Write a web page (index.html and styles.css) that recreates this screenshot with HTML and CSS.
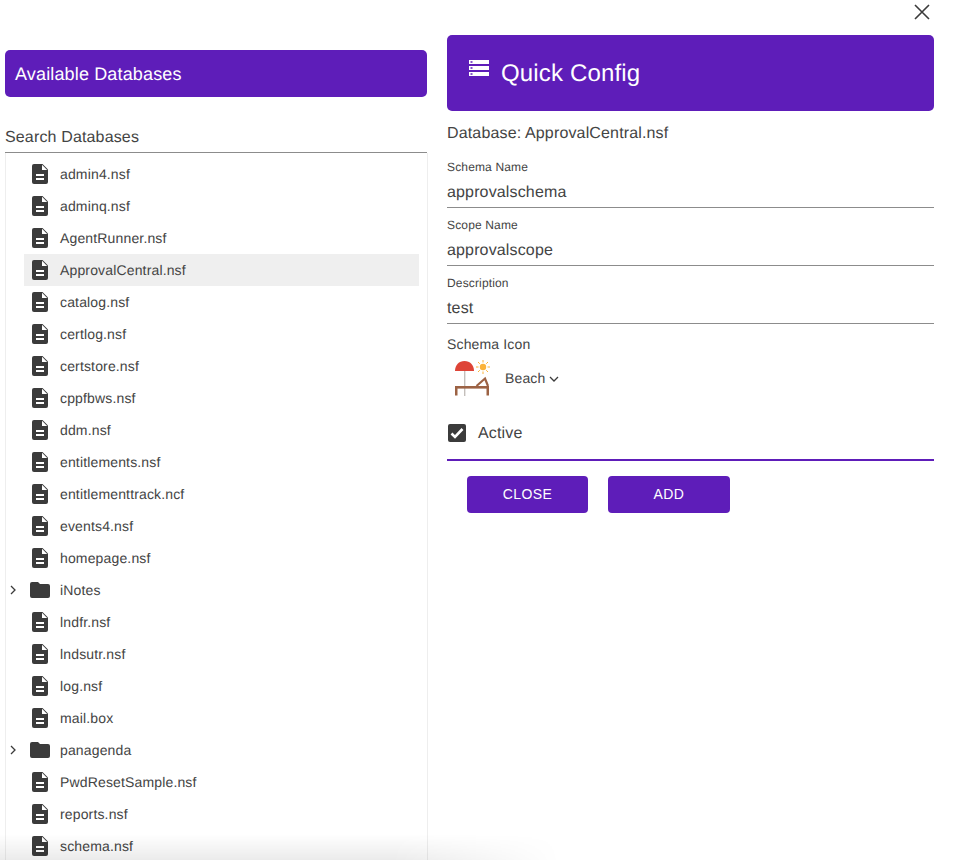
FILE: index.html
```html
<!DOCTYPE html>
<html lang="en">
  <head>
    <meta charset="UTF-8" />
    <meta name="viewport" content="width=device-width, initial-scale=1.0" />
    <title>Quick Config</title>
    <link rel="stylesheet" href="styles.css">
  </head>
  <body>
    <svg width="0" height="0" class="sprites">
      <symbol id="file" viewBox="0 0 16 20">
        <path d="M2 0h8.500L16 5.500V18a2 2 0 0 1-2 2H2a2 2 0 0 1-2-2V2a2 2 0 0 1 2-2z" fill="#3b3b3b"/>
        <path d="M10 .8V6h5.200z" fill="#fff"/>
        <rect x="4" y="10" width="8" height="2" fill="#fff"/>
        <rect x="4" y="14" width="8" height="2" fill="#fff"/>
      </symbol>
      <symbol id="folder" viewBox="0 0 20 16">
        <path d="M2 0h6l2 2h8a2 2 0 0 1 2 2v10a2 2 0 0 1-2 2H2a2 2 0 0 1-2-2V2a2 2 0 0 1 2-2z" fill="#3b3b3b"/>
      </symbol>
    </svg>

    <button class="dialog-close" aria-label="Close">
      <svg width="16" height="16" viewBox="0 0 16 16"><path d="M1 1l14 14M15 1L1 15" stroke="#3b3b3b" stroke-width="1.6" fill="none"/></svg>
    </button>

    <div class="dialog">
      <section class="left-col">
        <div class="banner-small">Available Databases</div>
        <div class="search-label">Search Databases</div>
        <ul class="tree">
          <li class="tree-row"><svg class="ico-file"><use href="#file"/></svg>admin4.nsf</li>
          <li class="tree-row"><svg class="ico-file"><use href="#file"/></svg>adminq.nsf</li>
          <li class="tree-row"><svg class="ico-file"><use href="#file"/></svg>AgentRunner.nsf</li>
          <li class="tree-row selected"><svg class="ico-file"><use href="#file"/></svg>ApprovalCentral.nsf</li>
          <li class="tree-row"><svg class="ico-file"><use href="#file"/></svg>catalog.nsf</li>
          <li class="tree-row"><svg class="ico-file"><use href="#file"/></svg>certlog.nsf</li>
          <li class="tree-row"><svg class="ico-file"><use href="#file"/></svg>certstore.nsf</li>
          <li class="tree-row"><svg class="ico-file"><use href="#file"/></svg>cppfbws.nsf</li>
          <li class="tree-row"><svg class="ico-file"><use href="#file"/></svg>ddm.nsf</li>
          <li class="tree-row"><svg class="ico-file"><use href="#file"/></svg>entitlements.nsf</li>
          <li class="tree-row"><svg class="ico-file"><use href="#file"/></svg>entitlementtrack.ncf</li>
          <li class="tree-row"><svg class="ico-file"><use href="#file"/></svg>events4.nsf</li>
          <li class="tree-row"><svg class="ico-file"><use href="#file"/></svg>homepage.nsf</li>
          <li class="tree-row folder">
            <svg class="ico-caret" viewBox="0 0 6 10"><path d="M1 1l4 4-4 4" stroke="#3b3b3b" stroke-width="1.3" fill="none"/></svg>
            <svg class="ico-folder"><use href="#folder"/></svg>iNotes
          </li>
          <li class="tree-row"><svg class="ico-file"><use href="#file"/></svg>lndfr.nsf</li>
          <li class="tree-row"><svg class="ico-file"><use href="#file"/></svg>lndsutr.nsf</li>
          <li class="tree-row"><svg class="ico-file"><use href="#file"/></svg>log.nsf</li>
          <li class="tree-row"><svg class="ico-file"><use href="#file"/></svg>mail.box</li>
          <li class="tree-row folder">
            <svg class="ico-caret" viewBox="0 0 6 10"><path d="M1 1l4 4-4 4" stroke="#3b3b3b" stroke-width="1.3" fill="none"/></svg>
            <svg class="ico-folder"><use href="#folder"/></svg>panagenda
          </li>
          <li class="tree-row"><svg class="ico-file"><use href="#file"/></svg>PwdResetSample.nsf</li>
          <li class="tree-row"><svg class="ico-file"><use href="#file"/></svg>reports.nsf</li>
          <li class="tree-row"><svg class="ico-file"><use href="#file"/></svg>schema.nsf</li>
        </ul>
      </section>

      <section class="right-col">
        <div class="banner-large">
          <svg class="ico-server" viewBox="0 0 20 16">
            <path fill="#fff" fill-rule="evenodd" d="M0 0h20v4H0zM1.500 1.200v1.600h2V1.200zM0 6h20v4H0zM1.500 7.200v1.600h2V7.200zM0 12h20v4H0zM1.500 13.200v1.600h2v-1.600z"/>
          </svg>
          <span class="banner-title">Quick Config</span>
        </div>
        <div class="db-name">Database: ApprovalCentral.nsf</div>

        <div class="field">
          <label>Schema Name</label>
          <div class="field-value">approvalschema</div>
        </div>
        <div class="field">
          <label>Scope Name</label>
          <div class="field-value">approvalscope</div>
        </div>
        <div class="field">
          <label>Description</label>
          <div class="field-value">test</div>
        </div>

        <div class="icon-label">Schema Icon</div>
        <div class="icon-pick">
          <svg class="ico-beach" viewBox="0 0 36 36">
            <rect x="9" y="10" width="1.400" height="26" fill="#c4bfbb"/>
            <path d="M0 11C0 5 4 1 9.500 1S19 5 19 11z" fill="#de4437"/>
            <path stroke="#fbb33a" stroke-width="1" d="M28 0v2.500M28 11.500V14M21 7h2.500M32.500 7H35M23 2l1.800 1.800M31.200 10.200L33 12M33 2l-1.800 1.800M24.800 10.200L23 12"/>
            <circle cx="28" cy="7" r="3.200" fill="#fbb33a"/>
            <rect x="0" y="26" width="34" height="2.600" fill="#9c6244"/>
            <rect x="0" y="26" width="2.500" height="9.500" fill="#9c6244"/>
            <rect x="31.500" y="26" width="2.500" height="9.500" fill="#9c6244"/>
            <path d="M21.500 26l8.500-7.500 3 7.500" stroke="#9c6244" stroke-width="2.200" fill="none"/>
          </svg>
          <span class="icon-name">Beach</span>
          <svg class="ico-chevron" viewBox="0 0 10 6"><path d="M1 1l4 4 4-4" stroke="#3b3b3b" stroke-width="1.300" fill="none"/></svg>
        </div>

        <div class="active-row">
          <span class="checkbox">
            <svg viewBox="0 0 18 18" width="18" height="18"><path d="M3.500 9.500l3.500 3.500 7.500-8" stroke="#fff" stroke-width="2.600" fill="none"/></svg>
          </span>
          <span class="active-label">Active</span>
        </div>

        <div class="actions">
          <button class="btn btn-close">CLOSE</button>
          <button class="btn btn-add">ADD</button>
        </div>
      </section>
    </div>

    <div class="bottom-fade"></div>
  </body>
</html>
```

FILE: styles.css
```css
html,
body {
  height: 860px;
  overflow: hidden;
}

body {
  margin: 0;
  font-family: "Liberation Sans", Arial, sans-serif;
  letter-spacing: 0.15px;
  text-rendering: geometricPrecision;
  color: #444;
  background-color: #fff;
  position: relative;
}

.sprites {
  position: absolute;
}

.dialog-close {
  position: absolute;
  top: 4px;
  left: 914px;
  width: 16px;
  height: 16px;
  padding: 0;
  border: none;
  background: none;
}

.dialog {
  display: flex;
  align-items: flex-start;
  gap: 20px;
  padding-left: 5px;
}

/* left side */
.left-col {
  width: 422px;
  padding-top: 50px;
}

.banner-small {
  height: 47px;
  line-height: 48px;
  padding-left: 10px;
  background-color: #5e1db9;
  color: #fff;
  border-radius: 5px;
  font-size: 18px;
}

.search-label {
  margin-top: 31px;
  height: 24px;
  line-height: 20px;
  font-size: 16px;
  border-bottom: 1px solid #8c8c8c;
}

.tree {
  list-style: none;
  margin: 0;
  padding: 5px 8px 0 18px;
  border-left: 1px solid #eeeeee;
  border-right: 1px solid #eeeeee;
  width: 395px;
  height: 707px;
  overflow: hidden;
}

.tree-row {
  position: relative;
  display: flex;
  align-items: center;
  height: 32px;
  padding-left: 36px;
  font-size: 14px;
}

.tree-row.selected {
  background-color: #efefef;
}

.ico-file {
  position: absolute;
  left: 8px;
  top: 6px;
  width: 16px;
  height: 20px;
}

.ico-folder {
  position: absolute;
  left: 6px;
  top: 8px;
  width: 20px;
  height: 16px;
}

.ico-caret {
  position: absolute;
  left: -14px;
  top: 11px;
  width: 6px;
  height: 10px;
}

/* right side */
.right-col {
  width: 487px;
  padding-top: 35px;
}

.banner-large {
  display: flex;
  align-items: center;
  height: 76px;
  padding-left: 22px;
  background-color: #5e1db9;
  color: #fff;
  border-radius: 5px;
  font-size: 24px;
}

.banner-title {
  padding-top: 2px;
}

.ico-server {
  width: 20px;
  height: 16px;
  margin-right: 12px;
  margin-top: -10px;
}

.db-name {
  margin-top: 13px;
  margin-bottom: 17px;
  height: 18px;
  line-height: 20px;
  font-size: 16px;
}

.field {
  height: 58px;
}

.field label {
  display: block;
  height: 16px;
  line-height: 16px;
  font-size: 12px;
}

.field-value {
  height: 32px;
  line-height: 35px;
  font-size: 16px;
  border-bottom: 1px solid #8c8c8c;
}

.icon-label {
  margin-top: 2px;
  height: 18px;
  line-height: 18px;
  font-size: 14px;
}

.icon-pick {
  display: flex;
  align-items: center;
  margin-top: 7px;
  padding-left: 8px;
  height: 36px;
}

.ico-beach {
  width: 36px;
  height: 36px;
}

.icon-name {
  margin-left: 14px;
  font-size: 14px;
}

.ico-chevron {
  width: 10px;
  height: 6px;
  margin-left: 4px;
  margin-top: 2px;
}

.active-row {
  display: flex;
  align-items: center;
  gap: 12px;
  height: 53px;
  margin-top: 10px;
  padding-left: 1px;
  font-size: 16px;
  border-bottom: 2px solid #5e1db9;
}

.active-label {
  padding-top: 2px;
}

.checkbox {
  display: block;
  width: 18px;
  height: 18px;
  background-color: #3b3b3b;
  border-radius: 2px;
}

.actions {
  display: flex;
  gap: 20px;
  padding: 15px 0 0 20px;
}

.btn {
  height: 37px;
  padding: 0 0 2px;
  border: none;
  border-radius: 4px;
  background-color: #5e1db9;
  color: #fff;
  font-family: "Liberation Sans", Arial, sans-serif;
  font-size: 14px;
  letter-spacing: 0.4px;
}

.btn-close {
  width: 121px;
}

.btn-add {
  width: 122px;
}

/* shadow coming up from whatever sits below the dialog */
.bottom-fade {
  position: absolute;
  left: 0;
  bottom: 0;
  width: 560px;
  height: 26px;
  background: linear-gradient(to bottom, rgba(0, 0, 0, 0), rgba(0, 0, 0, 0.08));
  -webkit-mask-image: linear-gradient(to right, #000 70%, transparent);
  mask-image: linear-gradient(to right, #000 70%, transparent);
}
```
